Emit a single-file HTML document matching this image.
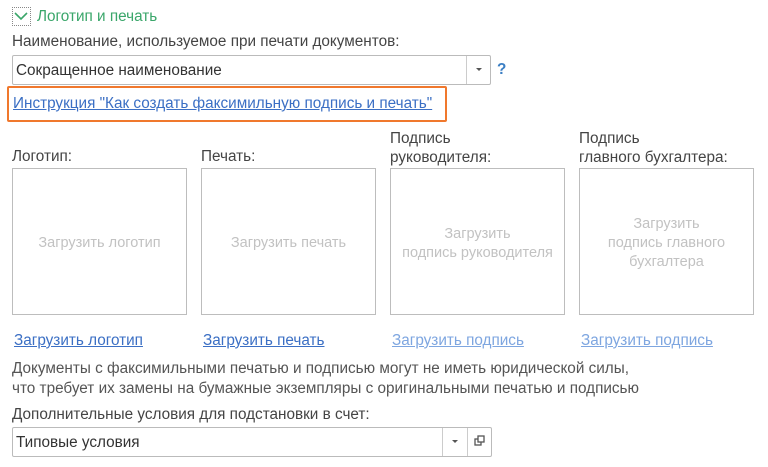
<!DOCTYPE html>
<html><head><meta charset="utf-8"><style>
body{margin:0;width:768px;height:467px;background:#fff;font-family:"Liberation Sans","Noto Sans CJK SC",sans-serif;font-size:15.3px;color:#444;position:relative;overflow:hidden}
.a{position:absolute;white-space:nowrap}
.box{position:absolute;border:1px solid #bdbdbd;top:168px;width:173px;height:145px;color:#c2c2c2;font-size:14.5px;text-align:center;display:flex;align-items:center;justify-content:center;line-height:19px;padding-top:4px;box-sizing:border-box;height:147px;width:175px}
.lnk{color:#3b6fc4;text-decoration:underline}
.lnk2{color:#7ea6e0;text-decoration:underline}
.combo{position:absolute;border:1px solid #bbb;border-radius:2px;background:#fff}
.btn{position:absolute;top:0;bottom:0;border-left:1px solid #ccc}
</style></head><body>
<div class="a" style="left:12px;top:7px;width:17px;height:17px;border:1px dotted #888"></div>
<svg class="a" style="left:14px;top:10px" width="14" height="12"><path d="M1 3 L7 9 L13 3" stroke="#3aa66a" stroke-width="1.6" fill="none"/></svg>
<div class="a" style="left:37px;top:8px;color:#3aa66a">Логотип и печать</div>
<div class="a" style="left:12px;top:33px">Наименование, используемое при печати документов:</div>
<div class="combo" style="left:12px;top:55px;width:477px;height:28px">
<div class="a" style="left:3px;top:6px;color:#333">Сокращенное наименование</div>
<div class="btn" style="left:453px;width:24px"><div style="position:absolute;left:9px;top:12px;border:3px solid transparent;border-top:3px solid #555"></div></div>
</div>
<div class="a" style="left:497px;top:61px;color:#3b7fc4;font-weight:bold">?</div>
<div class="a" style="left:7px;top:86px;width:436px;height:32px;border:2px solid #f0782d;border-radius:2px"></div>
<div class="a lnk" style="left:13px;top:95px">Инструкция "Как создать факсимильную подпись и печать"</div>
<div class="a" style="left:12px;top:148px">Логотип:</div>
<div class="a" style="left:201px;top:148px">Печать:</div>
<div class="a" style="left:390px;top:129px;line-height:19px">Подпись<br>руководителя:</div>
<div class="a" style="left:579px;top:129px;line-height:19px">Подпись<br>главного бухгалтера:</div>
<div class="box" style="left:12px">Загрузить логотип</div>
<div class="box" style="left:201px">Загрузить печать</div>
<div class="box" style="left:390px">Загрузить<br>подпись руководителя</div>
<div class="box" style="left:579px">Загрузить<br>подпись главного<br>бухгалтера</div>
<div class="a lnk" style="left:14px;top:332px">Загрузить логотип</div>
<div class="a lnk" style="left:203px;top:332px">Загрузить печать</div>
<div class="a lnk2" style="left:392px;top:332px">Загрузить подпись</div>
<div class="a lnk2" style="left:581px;top:332px">Загрузить подпись</div>
<div class="a" style="left:12px;top:359px;line-height:20px;color:#555">Документы с факсимильными печатью и подписью могут не иметь юридической силы,<br>что требует их замены на бумажные экземпляры с оригинальными печатью и подписью</div>
<div class="a" style="left:12px;top:406px">Дополнительные условия для подстановки в счет:</div>
<div class="combo" style="left:12px;top:427px;width:478px;height:28px">
<div class="a" style="left:3px;top:6px;color:#333">Типовые условия</div>
<div class="btn" style="left:429px;width:24px"><div style="position:absolute;left:9px;top:12px;border:3px solid transparent;border-top:3px solid #555"></div></div>
<div class="btn" style="left:454px;width:24px"><svg style="position:absolute;left:6px;top:7px" width="12" height="12"><rect x="1" y="4" width="6" height="6" fill="none" stroke="#555" stroke-width="1.3"/><rect x="4" y="1" width="6" height="6" fill="#fff" stroke="#555" stroke-width="1.3"/></svg></div>
</div>
</body></html>
